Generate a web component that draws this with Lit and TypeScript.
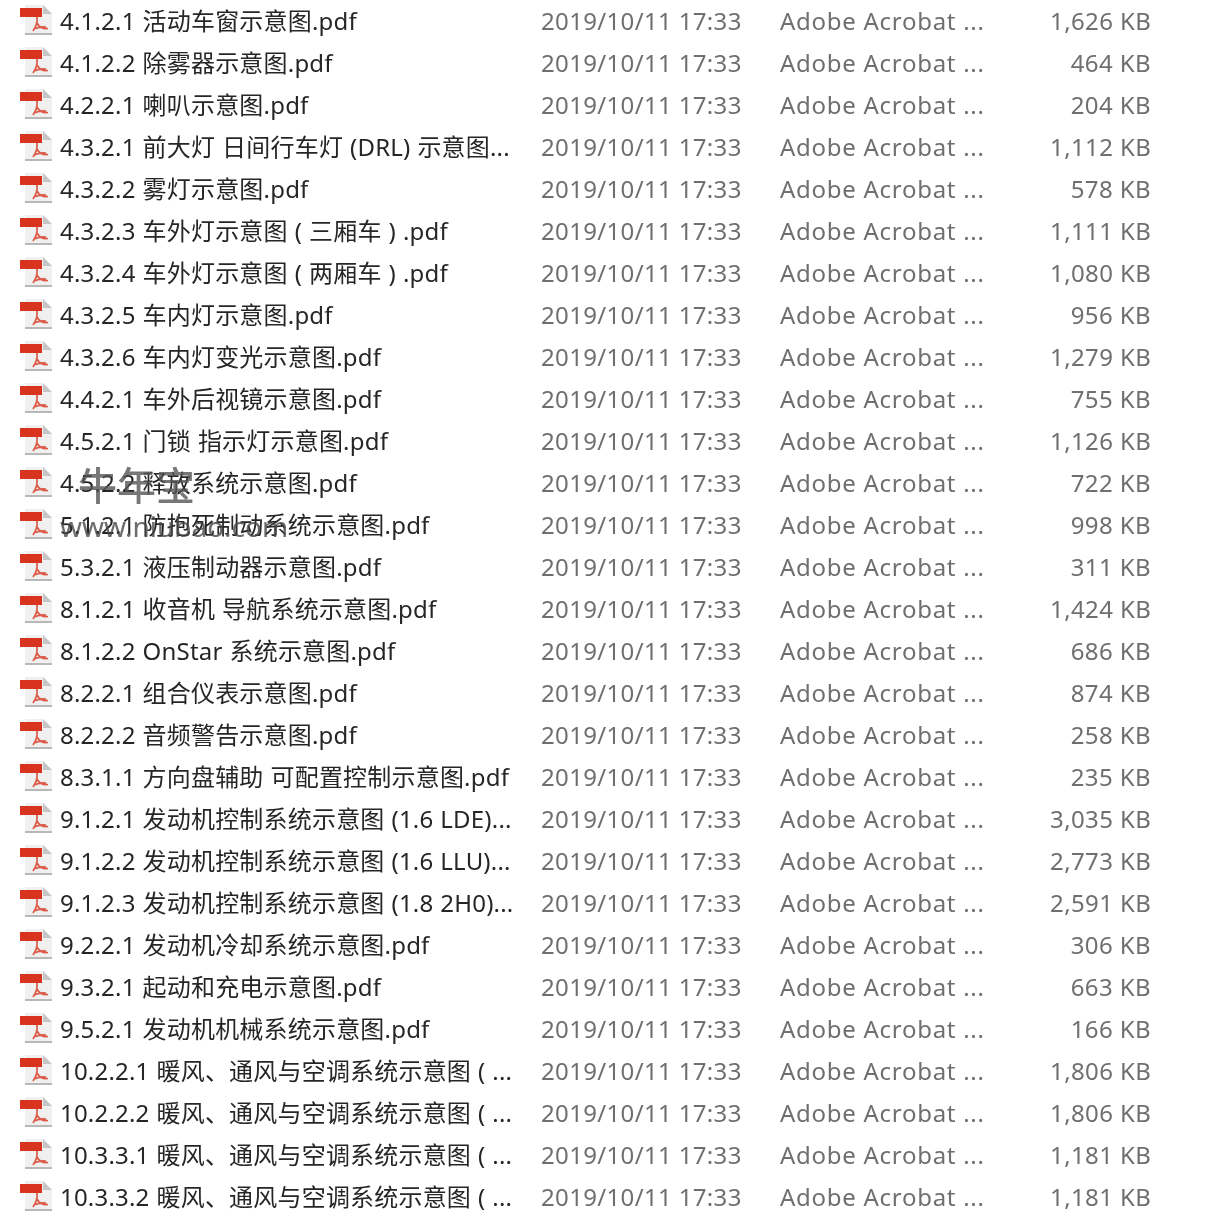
import { LitElement, html, css, svg } from "lit";
import { customElement } from "lit/decorators.js";

const rows: [string, string][] = [
  ["4.1.2.1 活动车窗示意图.pdf", "1,626 KB"],
  ["4.1.2.2 除雾器示意图.pdf", "464 KB"],
  ["4.2.2.1 喇叭示意图.pdf", "204 KB"],
  ["4.3.2.1 前大灯 日间行车灯 (DRL) 示意图...", "1,112 KB"],
  ["4.3.2.2 雾灯示意图.pdf", "578 KB"],
  ["4.3.2.3 车外灯示意图 ( 三厢车 ) .pdf", "1,111 KB"],
  ["4.3.2.4 车外灯示意图 ( 两厢车 ) .pdf", "1,080 KB"],
  ["4.3.2.5 车内灯示意图.pdf", "956 KB"],
  ["4.3.2.6 车内灯变光示意图.pdf", "1,279 KB"],
  ["4.4.2.1 车外后视镜示意图.pdf", "755 KB"],
  ["4.5.2.1 门锁 指示灯示意图.pdf", "1,126 KB"],
  ["4.5.2.2 释放系统示意图.pdf", "722 KB"],
  ["5.1.2.1 防抱死制动系统示意图.pdf", "998 KB"],
  ["5.3.2.1 液压制动器示意图.pdf", "311 KB"],
  ["8.1.2.1 收音机 导航系统示意图.pdf", "1,424 KB"],
  ["8.1.2.2 OnStar 系统示意图.pdf", "686 KB"],
  ["8.2.2.1 组合仪表示意图.pdf", "874 KB"],
  ["8.2.2.2 音频警告示意图.pdf", "258 KB"],
  ["8.3.1.1 方向盘辅助 可配置控制示意图.pdf", "235 KB"],
  ["9.1.2.1 发动机控制系统示意图 (1.6 LDE)...", "3,035 KB"],
  ["9.1.2.2 发动机控制系统示意图 (1.6 LLU)...", "2,773 KB"],
  ["9.1.2.3 发动机控制系统示意图 (1.8 2H0)...", "2,591 KB"],
  ["9.2.2.1 发动机冷却系统示意图.pdf", "306 KB"],
  ["9.3.2.1 起动和充电示意图.pdf", "663 KB"],
  ["9.5.2.1 发动机机械系统示意图.pdf", "166 KB"],
  ["10.2.2.1 暖风、通风与空调系统示意图 ( ...", "1,806 KB"],
  ["10.2.2.2 暖风、通风与空调系统示意图 ( ...", "1,806 KB"],
  ["10.3.3.1 暖风、通风与空调系统示意图 ( ...", "1,181 KB"],
  ["10.3.3.2 暖风、通风与空调系统示意图 ( ...", "1,181 KB"],
];

const pdfIcon = svg`<svg class="icon" width="34" height="36" viewBox="0 0 34 36">
  <path d="M6 2H24L33 11V32H6Z" fill="#f0f0f0"/>
  <path d="M24 2V11H33Z" fill="#c6c6c6"/>
  <rect x="6" y="30" width="27" height="2" fill="#b8b8b8"/>
  <rect x="1" y="5" width="22" height="9" fill="#d8331f"/>
  <path d="M18 14C18.500 19 17 24 14 28M18 20C20 24 24 26 29 25.500M15 26C20 24 24 23.500 27 24" fill="none" stroke="#dc5a48" stroke-width="1.700"/>
</svg>`;

@customElement("app-root")
export class AppRoot extends LitElement {
  static styles = css`
    :host { display: block; width: 1212px; height: 1212px; overflow: hidden; background: #fff; position: relative; }
    .list { display: flex; flex-direction: column; filter: blur(0.5px); }
    .row {
      display: grid;
      grid-template-columns: 60px 481px 239px 270px 101px;
      align-items: center;
      height: 42px;
      flex: none;
      font: 24px "Noto Sans", "Noto Sans CJK SC", sans-serif;
      white-space: nowrap;
    }
    .ic { display: flex; padding-left: 19px; }
    .name { padding-bottom: 4px; }
    .date, .type, .size { padding-bottom: 2px; }
    .name { color: #262626; overflow: hidden; letter-spacing: 0.2px; word-spacing: 0.5px; }
    .date, .type, .size { color: #6f6f6f; }
    .date { letter-spacing: 0.34px; }
    .type { letter-spacing: 0.72px; }
    .size { text-align: right; letter-spacing: 0.4px; }
    .mark {
      position: absolute; left: 78px; top: 455px;
      color: rgba(85, 85, 85, 0.8);
      font: 500 39px "Noto Sans CJK SC", sans-serif;
      white-space: nowrap;
      filter: blur(0.5px);
    }
    .url {
      position: absolute; left: 60px; top: 507px;
      color: rgba(70, 70, 70, 0.8);
      font: 28px "Noto Sans", sans-serif;
      white-space: nowrap;
      filter: blur(0.5px);
    }
  `;

  render() {
    return html`
      <div class="list">
        ${rows.map(
          ([name, size]) => html`<div class="row">
            <div class="ic">${pdfIcon}</div>
            <div class="name">${name}</div>
            <div class="date">2019/10/11 17:33</div>
            <div class="type">Adobe Acrobat ...</div>
            <div class="size">${size}</div>
          </div>`
        )}
      </div>
      <div class="mark">牛年宝</div>
      <div class="url">www.niubao.com</div>
    `;
  }
}
